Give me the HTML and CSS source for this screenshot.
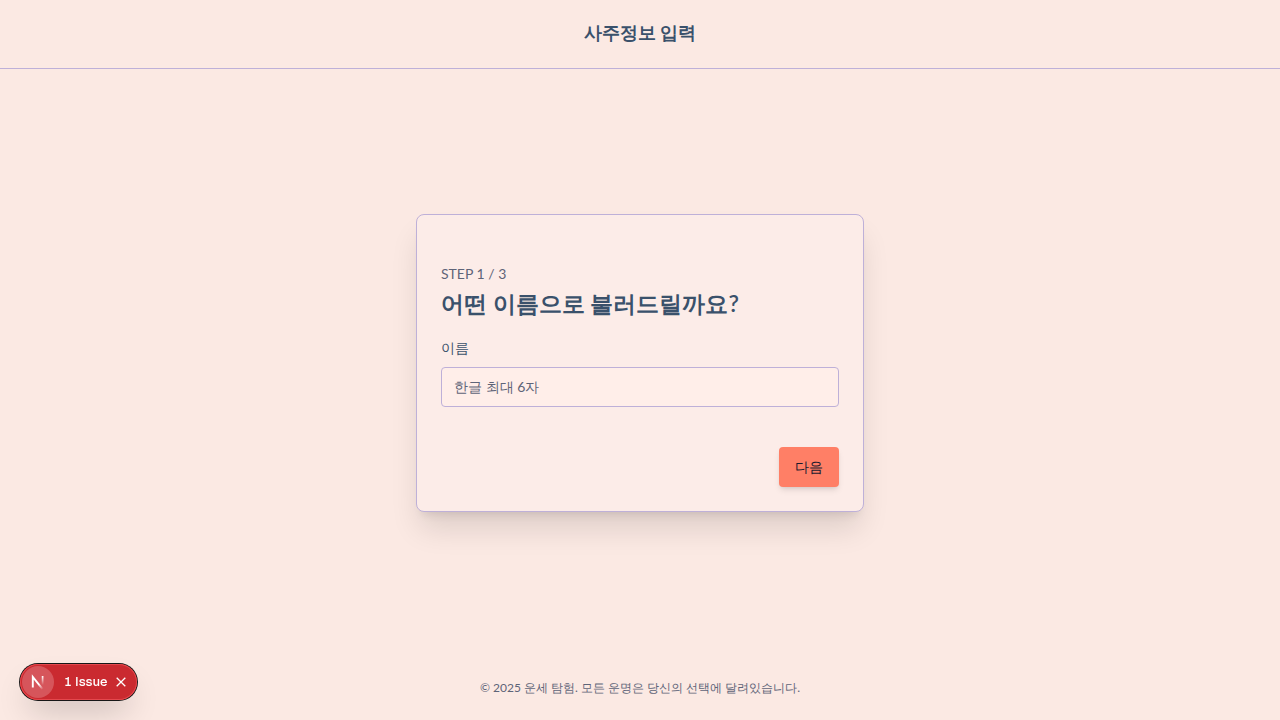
FILE: index.html
```html
<!DOCTYPE html>
<html lang="ko">
<head>
<meta charset="utf-8">
<meta name="viewport" content="width=device-width, initial-scale=1">
<title>사주정보 입력</title>
<link rel="stylesheet" href="styles.css">
</head>
<body>
<div class="page">
  <header class="header"><h1 class="header-title">사주정보 입력</h1></header>
  <main class="main">
    <form class="card">
      <p class="step">STEP 1 / 3</p>
      <h2 class="question">어떤 이름으로 불러드릴까요?</h2>
      <label class="label" for="name">이름</label>
      <input class="input" id="name" type="text" placeholder="한글 최대 6자">
      <div class="actions"><button class="next" type="button">다음</button></div>
    </form>
  </main>
  <footer class="footer">© 2025 운세 탐험. 모든 운명은 당신의 선택에 달려있습니다.</footer>
</div>
<div class="badge">
  <button class="badge-logo" type="button" aria-label="Open developer tools">
    <svg width="32" height="32" viewBox="0 0 32 32" fill="none">
      <defs>
        <linearGradient id="diagonal" gradientUnits="userSpaceOnUse" x1="17" y1="18" x2="21" y2="23"><stop stop-color="#fff"/><stop offset="1" stop-color="#fff" stop-opacity="0"/></linearGradient>
        <linearGradient id="stem" gradientUnits="userSpaceOnUse" x1="20" y1="10" x2="20" y2="19"><stop stop-color="#fff"/><stop offset="1" stop-color="#fff" stop-opacity="0"/></linearGradient>
      </defs>
      <path d="M10.8 21.5V11L20.8 23.4" stroke="url(#diagonal)" stroke-width="1.9"/>
      <path d="M20.6 10v9" stroke="url(#stem)" stroke-width="1.7"/>
    </svg>
  </button>
  <button class="badge-text" type="button">1 Issue</button>
  <button class="badge-close" type="button" aria-label="Close">
    <svg width="12" height="12" viewBox="0 0 12 12" fill="none" stroke="#fff" stroke-width="1.3"><path d="M1.7 1.7l8.6 8.6M10.3 1.7L1.7 10.3"/></svg>
  </button>
</div>
</body>
</html>
```
FILE: styles.css
```css
* { box-sizing: border-box; }
body, h1, h2, p { margin: 0; }
body, button, input { font-family: Lato, sans-serif; }
body { background: #fbe9e3; color: #3a516b; }
.page { min-height: 100vh; display: flex; flex-direction: column; }
.header { padding: 20px 16px 24px; border-bottom: 1px solid #beb0d8; text-align: center; }
.header-title { font-size: 18px; line-height: 24px; font-weight: 600; }
.main { flex: 1; display: flex; align-items: center; justify-content: center; padding: 16px; }
.card {
  width: 100%; max-width: 448px; padding: 48px 24px 24px;
  display: flex; flex-direction: column;
  background: #fcece8; border: 1px solid #beb0d8; border-radius: 8px;
  box-shadow: 0 20px 30px -4px rgb(0 0 0 / 12%), 0 8px 10px -6px rgb(0 0 0 / 10%);
}
.step { font-size: 14px; line-height: 22px; color: #5e6478; }
.question { margin: 2px 0 18px; font-size: 23px; line-height: 32px; font-weight: 600; }
.label { font-size: 14px; line-height: 22px; font-weight: 500; margin-bottom: 8px; }
.input {
  width: 100%; height: 40px; padding: 8px 12px; font-size: 14px; color: #3a516b;
  border: 1px solid #beb0d8; border-radius: 4px; background: #ffeee9;
}
.input::placeholder { color: #5e6478; opacity: 1; }
.actions { display: flex; justify-content: flex-end; margin-top: 40px; }
.next {
  height: 40px; padding: 8px 16px; border: 0; border-radius: 4px;
  background: #ff7f66; color: #1a1a2e; font-size: 14px; line-height: 20px; font-weight: 500;
  box-shadow: 0 4px 6px -1px rgb(0 0 0 / 10%), 0 2px 4px -2px rgb(0 0 0 / 10%);
}
.footer { padding: 24px 16px; text-align: center; font-size: 12px; line-height: 16px; color: #5e6478; }
.badge {
  position: fixed; left: 20px; bottom: 20px; height: 36px; padding: 2px;
  display: flex; align-items: center; border-radius: 18px; background: #ca2a30;
  box-shadow: 0 0 0 1px #171717, inset 0 0 0 1px #e5484d, 0 16px 32px -8px rgb(0 0 0 / 24%);
}
.badge button { border: 0; padding: 0; color: #fff; background: none; }
.badge .badge-logo { width: 32px; height: 32px; border-radius: 50%; background: #d6555b; }
.badge-logo svg, .badge-close svg { display: block; }
.badge .badge-text { margin: 0 8px 0 10px; font: 500 13px/20px Geist, Inter, sans-serif; font-variant-numeric: tabular-nums; }
.badge .badge-close { margin-right: 8px; }
```
